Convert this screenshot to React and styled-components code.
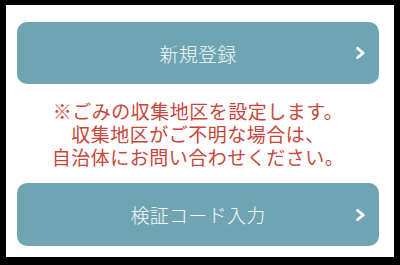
import React from 'react';
import styled, { createGlobalStyle } from 'styled-components';

const GlobalStyle = createGlobalStyle`
  html, body {
    margin: 0;
    padding: 0;
    background: #000;
  }
  body {
    font-family: "Noto Sans CJK JP", "Noto Sans", sans-serif;
  }
`;

const Frame = styled.div`
  width: 400px;
  height: 265px;
  box-sizing: border-box;
  padding: 5px 6px 8px 6px;
  background: #000;
`;

const Panel = styled.div`
  height: 100%;
  box-sizing: border-box;
  background: #fff;
  padding: 17px 15px 11px 11px;
  display: flex;
  flex-direction: column;
`;

const ActionButton = styled.button`
  position: relative;
  height: ${(p) => p.$height}px;
  flex-shrink: 0;
  border: none;
  border-radius: 10px;
  background: #6fa5b3;
  color: #f4f8f9;
  font-family: inherit;
  font-size: 19px;
  font-weight: 300;
  letter-spacing: 0.3px;
  display: flex;
  align-items: center;
  justify-content: center;
  padding: 0;
  cursor: pointer;
`;

const Chevron = styled.svg`
  position: absolute;
  right: 13px;
  top: 50%;
  transform: translateY(-50%);
`;

const Note = styled.p`
  flex: 1;
  margin: 0;
  display: flex;
  flex-direction: column;
  align-items: center;
  justify-content: center;
  color: #c8463c;
  font-size: 19px;
  letter-spacing: 0.5px;
  line-height: 23px;
  text-align: center;
`;

function Arrow() {
  return (
    <Chevron width="11" height="13" viewBox="0 0 11 13">
      <polyline
        points="2.5,1.8 8.2,6.5 2.5,11.2"
        fill="none"
        stroke="#fff"
        strokeWidth="2.8"
        strokeLinecap="round"
        strokeLinejoin="round"
      />
    </Chevron>
  );
}

export default function App() {
  return (
    <>
      <GlobalStyle />
      <Frame>
        <Panel>
          <ActionButton $height={62}>
            新規登録
            <Arrow />
          </ActionButton>
          <Note>
            <span>※ごみの収集地区を設定します。</span>
            <span>収集地区がご不明な場合は、</span>
            <span>自治体にお問い合わせください。</span>
          </Note>
          <ActionButton $height={63}>
            検証コード入力
            <Arrow />
          </ActionButton>
        </Panel>
      </Frame>
    </>
  );
}
